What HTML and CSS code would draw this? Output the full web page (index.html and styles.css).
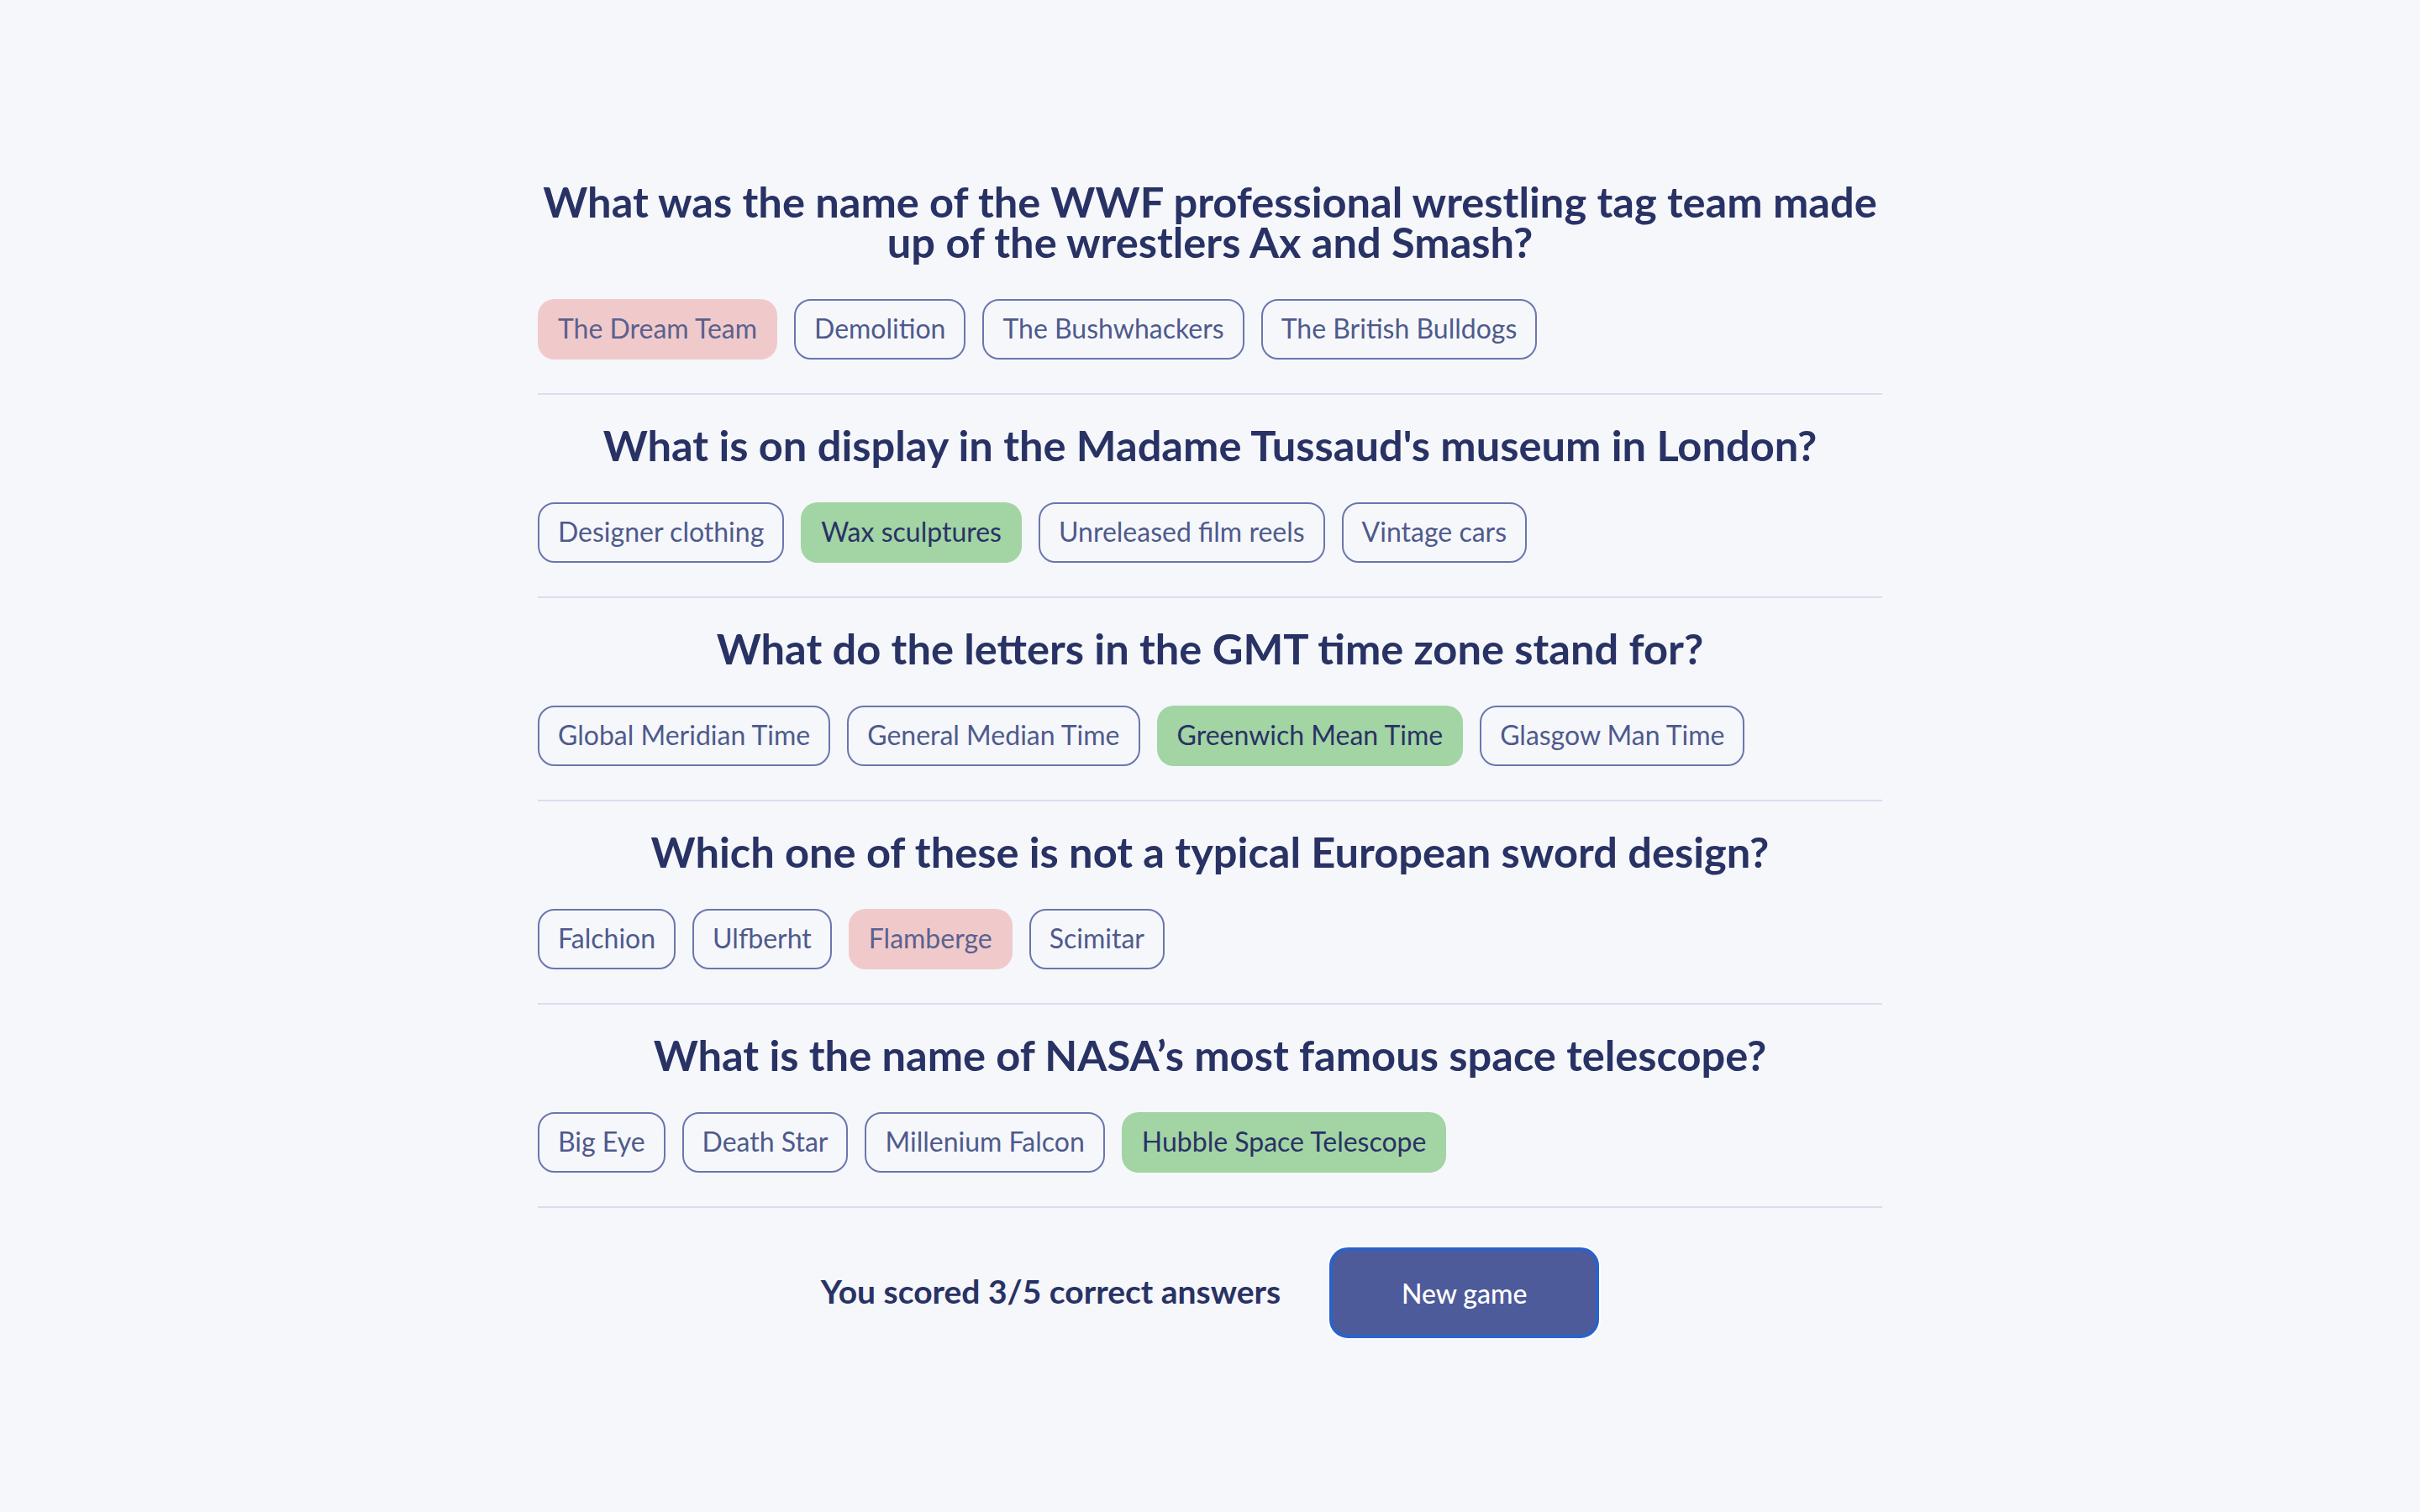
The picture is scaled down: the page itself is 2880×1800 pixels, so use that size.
FILE: index.html
```html
<!DOCTYPE html>
<html lang="en">
<head>
<meta charset="utf-8">
<title>Quizzical</title>
<link rel="stylesheet" href="styles.css">
</head>
<body>
<main class="quiz">
  <section class="question">
    <h2 class="question-title">What was the name of the WWF professional wrestling tag team made up of the wrestlers Ax and Smash?</h2>
    <div class="answers">
      <button class="answer answer--wrong">The Dream Team</button>
      <button class="answer">Demolition</button>
      <button class="answer">The Bushwhackers</button>
      <button class="answer">The British Bulldogs</button>
    </div>
  </section>
  <section class="question">
    <h2 class="question-title">What is on display in the Madame Tussaud's museum in London?</h2>
    <div class="answers">
      <button class="answer">Designer clothing</button>
      <button class="answer answer--right">Wax sculptures</button>
      <button class="answer">Unreleased film reels</button>
      <button class="answer">Vintage cars</button>
    </div>
  </section>
  <section class="question">
    <h2 class="question-title">What do the letters in the GMT time zone stand for?</h2>
    <div class="answers">
      <button class="answer">Global Meridian Time</button>
      <button class="answer">General Median Time</button>
      <button class="answer answer--right">Greenwich Mean Time</button>
      <button class="answer">Glasgow Man Time</button>
    </div>
  </section>
  <section class="question">
    <h2 class="question-title">Which one of these is not a typical European sword design?</h2>
    <div class="answers">
      <button class="answer">Falchion</button>
      <button class="answer">Ulfberht</button>
      <button class="answer answer--wrong">Flamberge</button>
      <button class="answer">Scimitar</button>
    </div>
  </section>
  <section class="question">
    <h2 class="question-title">What is the name of NASA’s most famous space telescope?</h2>
    <div class="answers">
      <button class="answer">Big Eye</button>
      <button class="answer">Death Star</button>
      <button class="answer">Millenium Falcon</button>
      <button class="answer answer--right">Hubble Space Telescope</button>
    </div>
  </section>
  <div class="result">
    <p class="score">You scored 3/5 correct answers</p>
    <button class="new-game">New game</button>
  </div>
</main>
</body>
</html>
```

FILE: styles.css
```css
* {
  box-sizing: border-box;
}

html, body {
  margin: 0;
  background: #f5f7fb;
}

body {
  font-family: "Lato", "Noto Sans", sans-serif;
  color: #293264;
}

.quiz {
  width: 1600px;
  margin: 0 auto;
  padding-top: 180px;
}

.question {
  padding: 36px 0 40px;
  border-bottom: 2px solid #dbdcee;
}

.question-title {
  margin: 0 -6px 44px;
  font-size: 50.6px;
  line-height: 48px;
  font-weight: 700;
  text-align: center;
  color: #293264;
}

.answers {
  display: flex;
  gap: 20px;
}

.answer {
  height: 72px;
  padding: 0 22px 3px;
  font-family: inherit;
  font-size: 32px;
  font-weight: 400;
  color: #4f5a8c;
  background: transparent;
  border: 2px solid #6b76ae;
  border-radius: 20px;
  cursor: pointer;
}

.answer--wrong {
  background: #f0caca;
  border-color: transparent;
  color: #5a6190;
}

.answer--right {
  background: #a2d4a4;
  border-color: transparent;
  color: #293264;
}

.result {
  display: flex;
  justify-content: center;
  align-items: center;
  gap: 58px;
  margin-top: 47px;
}

.score {
  margin: 0 0 4px;
  font-size: 39px;
  font-weight: 700;
  color: #293264;
}

.new-game {
  width: 321px;
  height: 108px;
  font-family: inherit;
  font-size: 32px;
  font-weight: 500;
  color: #ffffff;
  background: #4e5b9a;
  border: 4px solid #2a62c9;
  border-radius: 22px;
  box-shadow: 0 0 0 2px #ffffff;
  cursor: pointer;
}
```
